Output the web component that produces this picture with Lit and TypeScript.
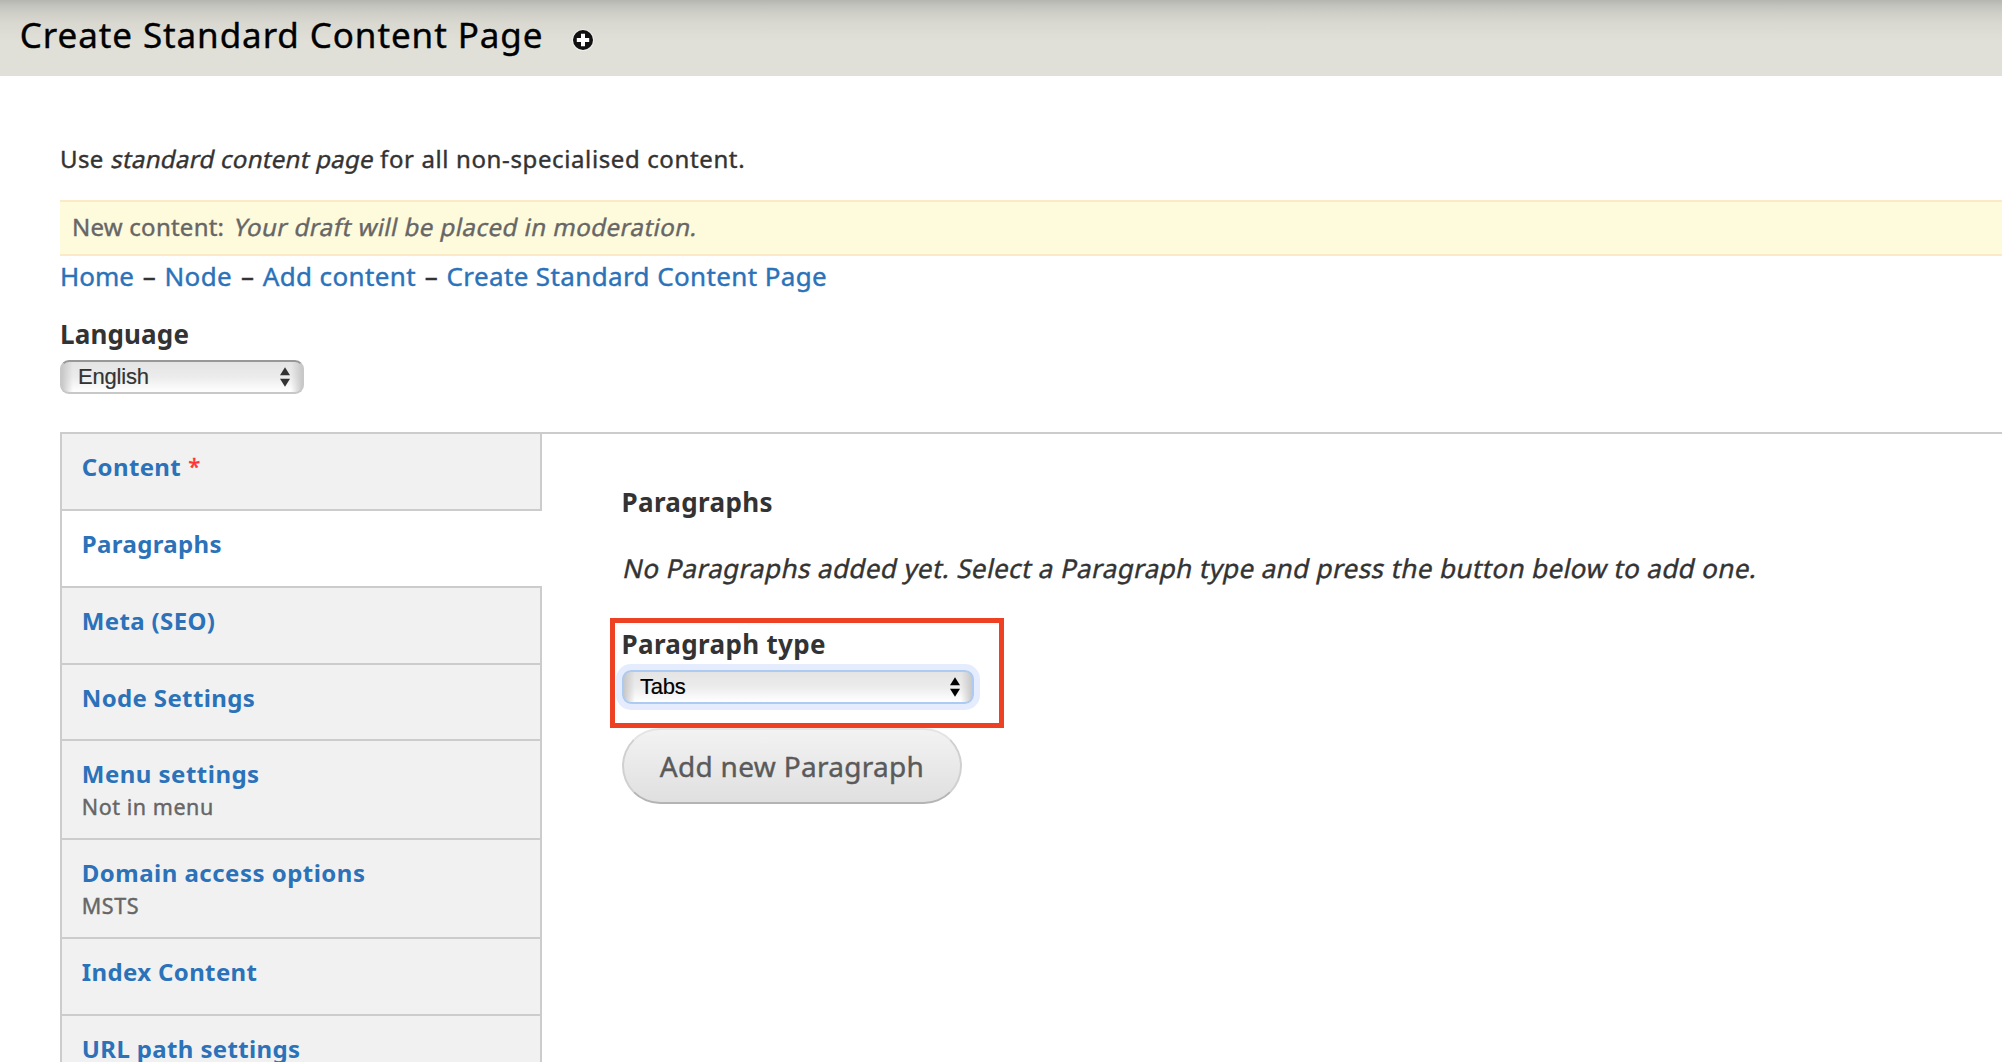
import { LitElement, html, css, svg, nothing } from "lit";
import { customElement, property } from "lit/decorators.js";
import { classMap } from "lit/directives/class-map.js";

interface Tab {
  title: string;
  summary?: string;
  required?: boolean;
  active?: boolean;
}

const TABS: Tab[] = [
  { title: "Content", required: true },
  { title: "Paragraphs", active: true },
  { title: "Meta (SEO)" },
  { title: "Node Settings" },
  { title: "Menu settings", summary: "Not in menu" },
  { title: "Domain access options", summary: "MSTS" },
  { title: "Index Content" },
  { title: "URL path settings" },
];

@customElement("mac-select")
export class MacSelect extends LitElement {
  @property() value = "";
  @property({ type: Boolean, reflect: true }) focused = false;

  static styles = css`
    :host {
      display: flex;
      align-items: center;
      justify-content: space-between;
      box-sizing: border-box;
      height: 34px;
      padding: 0 12px 0 16px;
      border: 2px solid #c8c8c8;
      border-top-color: #989898;
      border-radius: 9px;
      background: linear-gradient(90deg, #c8c8c8, #c8c8c800 11px calc(100% - 11px), #c8c8c8),
        linear-gradient(#e4e4e4, #ececec 50%, #fff);
      font: 22px/30px "Liberation Sans", Arial, sans-serif;
      letter-spacing: -0.2px;
      color: #333;
      -webkit-text-stroke: 0.2px currentColor;
    }
    :host([focused]) {
      border-color: #adcaf1;
      color: #000;
      box-shadow: 0 0 0 6px #e4ecfd;
    }
    .arrows {
      display: block;
      fill: currentColor;
    }
  `;

  render() {
    return html`<span>${this.value}</span>
      <svg class="arrows" width="10" height="20" viewBox="0 0 10 20">
        ${svg`<path d="M5 0.3 10 8.2H0Z M0 11.8H10L5 19.7Z" />`}
      </svg>`;
  }
}

@customElement("app-root")
export class AppRoot extends LitElement {
  static styles = css`
    :host {
      display: block;
      height: 1062px;
      overflow: hidden;
      background: #fff;
      color: #333;
      font: 24px/34px "Noto Sans", "Open Sans", sans-serif;
      -webkit-text-stroke: 0.4px currentColor;
    }
    .branding {
      display: flex;
      box-sizing: border-box;
      height: 76px;
      padding-left: 19.8px;
      background: linear-gradient(#b5b6b0, #c3c4be 6px, #d0d0c9 14px, #d9d9d2 24px, #e0e0d8 42px);
    }
    h1 {
      margin: 0;
      font-size: 35px;
      line-height: 69px;
      font-weight: 400;
      letter-spacing: 0.91px;
      color: #000;
    }
    .add {
      display: block;
      margin: 29px 0 0 28.5px;
    }
    .page {
      padding: 66px 0 0 60px;
    }
    .line {
      display: flex;
      white-space: pre;
    }
    .slant {
      transform: skewX(-12deg);
      transform-origin: 0 76%;
    }
    .use {
      letter-spacing: 0.4px;
    }
    .type {
      letter-spacing: 0.3px;
    }
    .rest {
      letter-spacing: 0.62px;
    }
    .notice {
      margin-top: 24px;
      padding: 0 0 2px 12px;
      border: solid #fce9c6;
      border-width: 2px 0;
      background: #fefadc;
      line-height: 50px;
      color: #666;
      letter-spacing: 0.24px;
    }
    .draft {
      margin-left: 1px;
      letter-spacing: 0.5px;
    }
    .crumbs {
      font-size: 26px;
      line-height: 40px;
      letter-spacing: 0.38px;
    }
    .crumbs a:first-child {
      letter-spacing: 0;
    }
    .crumbs a,
    .tab-title {
      color: #2b72b9;
    }
    .dash {
      width: 30.5px;
      text-align: center;
      letter-spacing: 0;
    }
    .label {
      font-size: 26px;
      font-weight: 700;
      letter-spacing: 0.34px;
      -webkit-text-stroke: 0;
    }
    .language {
      width: 244px;
      margin-top: 21px;
    }
    .language .label {
      letter-spacing: 0.15px;
    }
    .language mac-select {
      margin-top: 9px;
    }
    .panes {
      display: flex;
      margin-top: 38.2px;
      border-top: 2px solid #ccc;
    }
    .tabs {
      box-sizing: border-box;
      width: 482px;
      flex: none;
      margin: 0;
      padding: 0;
      list-style: none;
      border-left: 2px solid #ccc;
    }
    .tab {
      box-sizing: border-box;
      height: 77px;
      padding: 18px 0 0 19.8px;
      border: solid #ccc;
      border-width: 0 2px 2px 0;
      background: #f1f1f1;
      line-height: 30px;
    }
    .tab:nth-child(4) {
      height: 76px;
    }
    .tab.tall {
      height: 99px;
    }
    .tab.active {
      background: #fff;
      border-right: none;
    }
    .tab-title {
      font-weight: 700;
      letter-spacing: 0.36px;
      -webkit-text-stroke: 0;
    }
    .tall .tab-title {
      letter-spacing: 0.48px;
    }
    .required {
      display: inline-block;
      width: 14px;
      margin: -3px 0 0 1px;
      font-size: 22px;
      vertical-align: 2px;
      line-height: 20px;
      color: #f33;
    }
    .summary {
      margin-top: 3px;
      font-size: 21.5px;
      letter-spacing: 0.55px;
      color: #666;
    }
    .pane {
      padding: 51px 0 0 79.5px;
    }
    .empty {
      margin-top: 32px;
      padding-left: 0.5px;
      font-size: 26px;
      letter-spacing: 0.39px;
    }
    .field {
      position: relative;
      width: 352px;
      margin-top: 42px;
    }
    .field mac-select {
      margin: 9px 0 0 0.5px;
    }
    .highlight {
      position: absolute;
      box-sizing: border-box;
      left: -12px;
      top: -9.6px;
      width: 394px;
      height: 110px;
      border: 5px solid #ee4023;
      pointer-events: none;
    }
    .button {
      display: block;
      box-sizing: border-box;
      width: 340px;
      height: 76px;
      margin: 24px 0 0 0.5px;
      padding: 0 0 1px;
      border: 2px solid #d0d0d0;
      border-top-color: #e4e4e4;
      border-bottom-color: #b4b4b4;
      border-radius: 38px;
      background: linear-gradient(#f3f3f3, #dfdfdf);
      background-origin: border-box;
      font: inherit;
      font-size: 28px;
      letter-spacing: 0.3px;
      color: #5a5a5a;
    }
  `;

  private tab(t: Tab) {
    return html`<li class=${classMap({ tab: true, active: !!t.active, tall: !!t.summary })}>
      <span class="tab-title">${t.title}</span>${t.required
        ? html` <span class="required">*</span>`
        : nothing}
      ${t.summary ? html`<div class="summary">${t.summary}</div>` : nothing}
    </li>`;
  }

  render() {
    return html`
      <header class="branding">
        <h1>Create Standard Content Page</h1>
        <svg class="add" width="22" height="22" viewBox="0 0 22 22">
          <circle cx="11" cy="11.3" r="11" fill="#efefec" />
          <circle cx="11" cy="11" r="10" fill="#111" />
          <path d="M9 4.8h4V9h4.2v4H13v4.2H9V13H4.8V9H9Z" fill="#fff" />
        </svg>
      </header>
      <main class="page">
        <div class="line"><span class="use">Use </span><span class="slant type">standard content page</span><span class="rest"> for all non-specialised content.</span></div>
        <div class="line notice"><span>New content: </span><span class="slant draft">Your draft will be placed in moderation.</span></div>
        <nav class="line crumbs"><a>Home</a><span class="dash">–</span><a>Node</a><span class="dash">–</span><a>Add content</a><span class="dash">–</span><a>Create Standard Content Page</a></nav>
        <div class="language">
          <div class="label">Language</div>
          <mac-select value="English"></mac-select>
        </div>
        <div class="panes">
          <ul class="tabs">${TABS.map((t) => this.tab(t))}</ul>
          <section class="pane">
            <div class="label">Paragraphs</div>
            <div class="line empty"><span class="slant">No Paragraphs added yet. Select a Paragraph type and press the button below to add one.</span></div>
            <div class="field">
              <div class="label">Paragraph type</div>
              <mac-select value="Tabs" focused></mac-select>
              <div class="highlight"></div>
            </div>
            <button class="button">Add new Paragraph</button>
          </section>
        </div>
      </main>
    `;
  }
}
